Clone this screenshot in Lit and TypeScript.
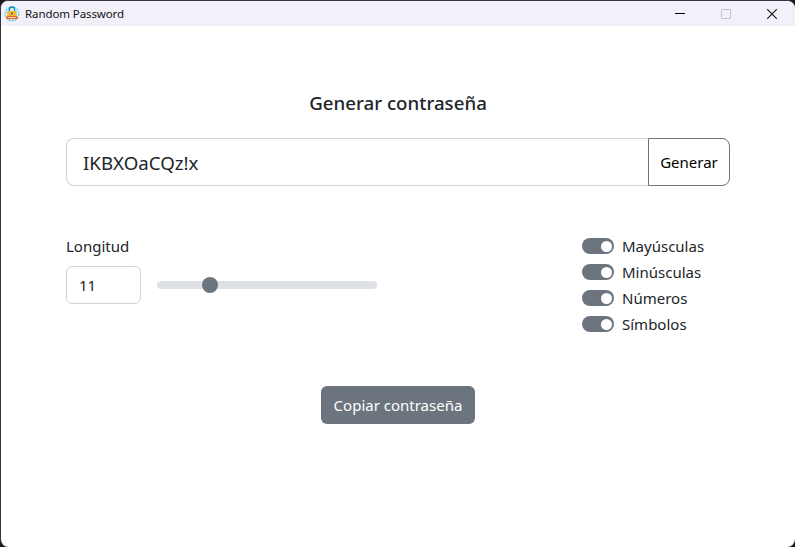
import { LitElement, html, css } from "lit";
import { customElement, property, state } from "lit/decorators.js";

@customElement("title-bar")
export class TitleBar extends LitElement {
  static styles = css`
    :host {
      display: flex;
      align-items: center;
      height: 25px;
      background: #f2f1f9;
      color: #191919;
    }
    .logo {
      width: 16px;
      height: 16px;
      margin-left: 3px;
      display: block;
    }
    .name {
      flex: 1;
      margin-left: 5px;
      font-size: 11.5px;
      line-height: 16px;
      letter-spacing: -0.1px;
      color: #111;
    }
    .control {
      width: 46px;
      display: flex;
      justify-content: center;
    }
    .control svg {
      display: block;
    }
  `;

  render() {
    return html`
      <svg class="logo" viewBox="0 0 16 16" fill="none">
        <circle cx="8" cy="8" r="6.9" stroke="#3fd0ee" stroke-width="1.3" stroke-dasharray="1.8 1.3" />
        <circle cx="8" cy="8" r="6" fill="#c9f1fa" />
        <path d="M5.3 6V3.7a2.7 2.7 0 0 1 5.4 0V6" stroke="#1786b8" stroke-width="1.3" />
        <rect x="3.3" y="5" width="9.4" height="6" rx="0.8" fill="#fbb52c" />
        <circle cx="8" cy="7.4" r="1" fill="#1b5f91" />
        <rect x="2.3" y="10" width="11.4" height="3.3" rx="1.4" fill="#f2602b" />
        <path d="M4.2 11.6h7.6" stroke="#ffe3d2" stroke-width="1" />
      </svg>
      <span class="name">Random Password</span>
      <span class="control">
        <svg width="10" height="11" viewBox="0 0 10 11"><path d="M0 5.5h10" stroke="#000" /></svg>
      </span>
      <span class="control">
        <svg width="10" height="10" viewBox="0 0 10 10">
          <rect x="0.5" y="0.5" width="9" height="9" rx="0.7" fill="none" stroke="#c3c2c8" />
        </svg>
      </span>
      <span class="control">
        <svg width="10" height="10" viewBox="0 0 10 10">
          <path d="M0.2 0.2l9.6 9.6M9.8 0.2l-9.6 9.6" stroke="#111" stroke-width="1.1" />
        </svg>
      </span>
    `;
  }
}

@customElement("toggle-switch")
export class ToggleSwitch extends LitElement {
  @property() label = "";
  @property({ type: Boolean, reflect: true }) checked = false;

  static styles = css`
    :host {
      display: flex;
      align-items: center;
      gap: 8px;
      height: 24px;
    }
    .track {
      box-sizing: border-box;
      width: 32px;
      height: 16px;
      padding: 2.5px;
      border-radius: 8px;
      background: #dee2e6;
      display: flex;
    }
    :host([checked]) .track {
      background: #6c757d;
      justify-content: flex-end;
    }
    .knob {
      width: 11px;
      height: 11px;
      border-radius: 50%;
      background: #fff;
    }
    .label {
      white-space: nowrap;
    }
  `;

  render() {
    return html`
      <span class="track" @click=${() => (this.checked = !this.checked)}><span class="knob"></span></span>
      <span class="label">${this.label}</span>
    `;
  }
}

@customElement("app-root")
export class AppRoot extends LitElement {
  @state() private password = "IKBXOaCQz!x";
  @state() private length = 11;

  private options = ["Mayúsculas", "Minúsculas", "Números", "Símbolos"];

  static styles = css`
    :host {
      display: block;
      height: 547px;
      background: #1c1a1c;
      font-family: "Noto Sans", "Open Sans", sans-serif;
      font-size: 15px;
      line-height: 24px;
      color: #212529;
    }
    .window {
      box-sizing: border-box;
      height: 547px;
      border-top: 1px solid #363438;
      border-left: 1px solid #363438;
      border-radius: 8px;
      background: #fff;
      overflow: hidden;
    }
    .content {
      width: 664px;
      margin: 65px 0 0 65px;
      display: flex;
      flex-direction: column;
    }
    .title {
      margin: 0;
      text-align: center;
      font-size: 18.7px;
      font-weight: 500;
      line-height: 24px;
    }
    .group {
      display: flex;
      height: 48px;
      margin-top: 23px;
    }
    .password {
      box-sizing: border-box;
      flex: 1;
      padding: 0 16px;
      border: 1px solid #ced4da;
      border-right: 0;
      border-radius: 8px 0 0 8px;
      font-size: 18.7px;
      line-height: 48px;
    }
    .generate {
      box-sizing: border-box;
      width: 82px;
      border: 1px solid #6c757d;
      border-radius: 0 8px 8px 0;
      text-align: center;
      line-height: 46px;
      color: #000;
    }
    .settings {
      display: flex;
      justify-content: space-between;
      margin-top: 48px;
    }
    .row {
      display: flex;
      align-items: center;
      gap: 16px;
      margin-top: 8px;
    }
    .number {
      box-sizing: border-box;
      width: 75px;
      height: 38px;
      padding: 0 12px;
      border: 1px solid #ced4da;
      border-radius: 6px;
      line-height: 37px;
    }
    .slider {
      width: 220px;
      height: 8px;
      border-radius: 4px;
      background: #dee2e6;
      display: flex;
      align-items: center;
    }
    .thumb {
      width: 16px;
      height: 16px;
      border-radius: 50%;
      background: #6c757d;
    }
    .options {
      width: 148px;
      display: flex;
      flex-direction: column;
      gap: 2px;
    }
    .copy {
      align-self: center;
      width: 154px;
      height: 38px;
      margin-top: 50px;
      border-radius: 6px;
      background: #6c757d;
      color: #fff;
      text-align: center;
      line-height: 38px;
      white-space: nowrap;
    }
  `;

  render() {
    const offset = ((this.length - 4) / 32) * 204;
    return html`
      <div class="window">
        <title-bar></title-bar>
        <main class="content">
          <h1 class="title">Generar contraseña</h1>
          <div class="group">
            <div class="password">${this.password}</div>
            <div class="generate" role="button">Generar</div>
          </div>
          <div class="settings">
            <div>
              <div class="caption">Longitud</div>
              <div class="row">
                <div class="number">${this.length}</div>
                <div class="slider"><span class="thumb" style="margin-left:${offset}px"></span></div>
              </div>
            </div>
            <div class="options">
              ${this.options.map((o) => html`<toggle-switch label=${o} checked></toggle-switch>`)}
            </div>
          </div>
          <div class="copy" role="button">Copiar contraseña</div>
        </main>
      </div>
    `;
  }
}
